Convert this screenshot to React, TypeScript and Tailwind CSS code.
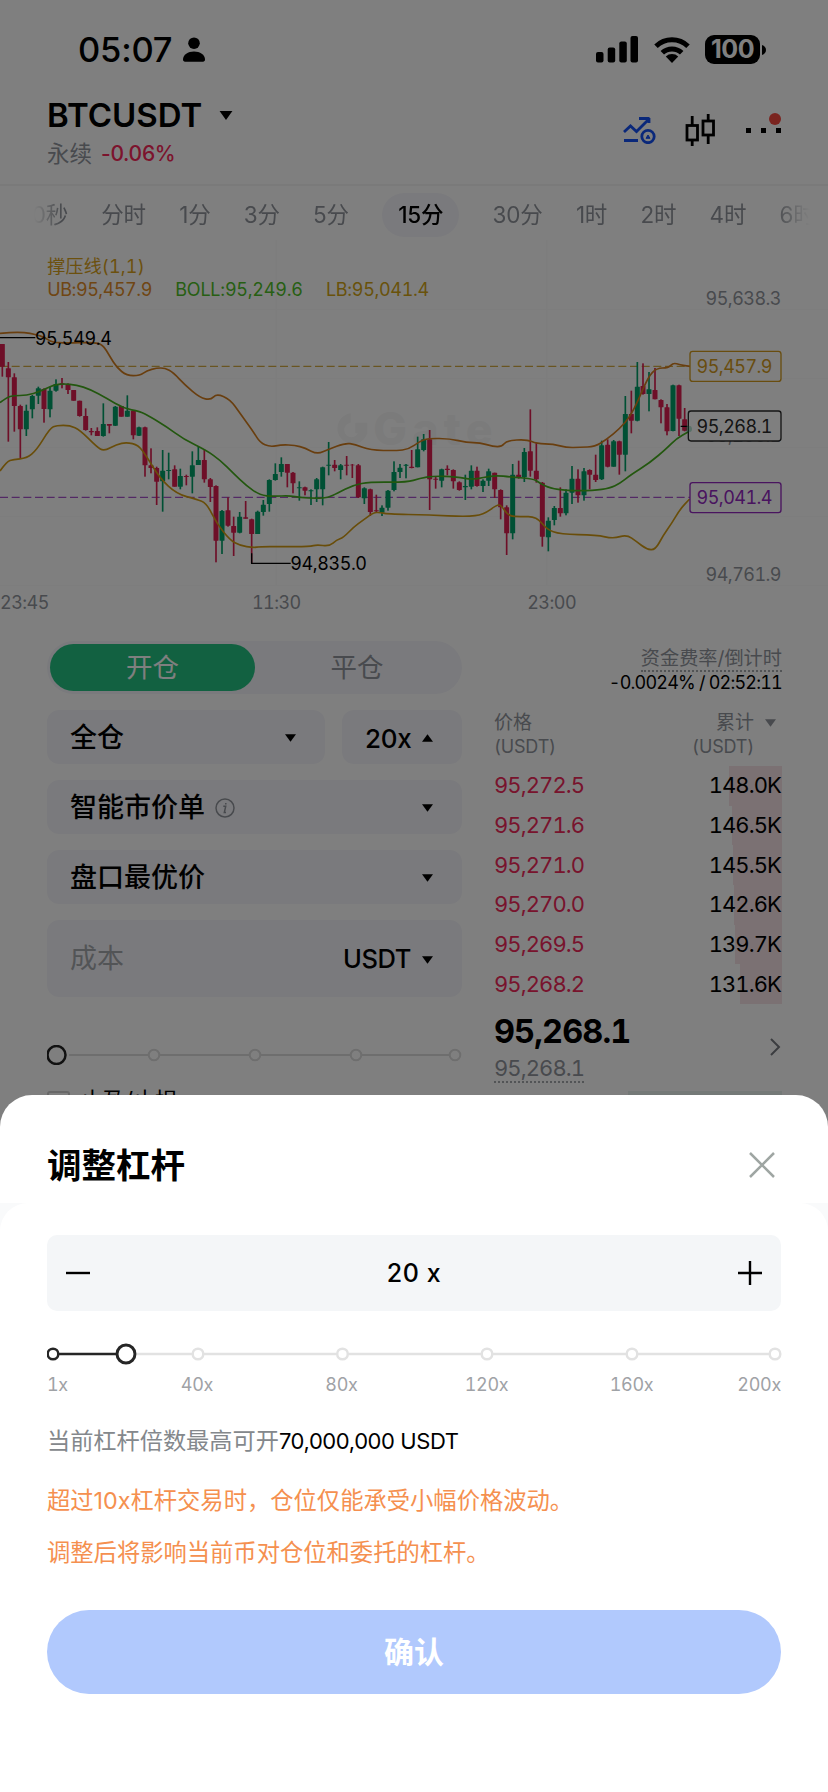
import type { ReactNode } from 'react';
import clsx from 'clsx';

type Point = [number, number];
// x, high, low, body top, body bottom, 1 = up / 0 = down
type Candle = [number, number, number, number, number, 0 | 1];

const INTERVALS = ['30秒', '分时', '1分', '3分', '5分', '15分', '30分', '1时', '2时', '4时', '6时'];

const ASKS = [
  { price: '95,272.5', total: '148.0K', depth: 53 },
  { price: '95,271.6', total: '146.5K', depth: 50 },
  { price: '95,271.0', total: '145.5K', depth: 49 },
  { price: '95,270.0', total: '142.6K', depth: 48 },
  { price: '95,269.5', total: '139.7K', depth: 47 },
  { price: '95,268.2', total: '131.6K', depth: 42 },
];

const CANDLES: Candle[] = [
  [7, 312, 410, 312, 380, 0], [25, 366, 605, 385, 412, 0], [43, 400, 575, 412, 498, 0],
  [61, 494, 655, 498, 568, 0], [79, 494, 588, 512, 568, 1], [97, 465, 535, 468, 508, 1],
  [115, 440, 492, 445, 467, 1], [132, 445, 548, 447, 507, 0], [150, 440, 532, 452, 508, 1],
  [168, 418, 455, 432, 452, 1], [186, 414, 445, 430, 434, 0], [204, 430, 462, 434, 450, 0],
  [221, 450, 482, 450, 482, 0], [239, 482, 530, 482, 528, 0], [257, 505, 572, 528, 570, 0],
  [274, 564, 586, 573, 577, 0], [292, 562, 588, 573, 588, 0], [310, 490, 590, 552, 588, 1],
  [328, 552, 580, 552, 557, 0], [346, 498, 558, 500, 557, 1], [364, 498, 530, 498, 530, 0],
  [382, 466, 530, 512, 530, 1], [400, 512, 598, 512, 586, 0], [417, 560, 588, 562, 587, 1],
  [435, 560, 710, 562, 676, 0], [453, 625, 700, 676, 684, 0], [470, 680, 795, 684, 725, 0],
  [488, 630, 815, 692, 724, 1], [506, 638, 718, 690, 693, 1], [524, 676, 740, 688, 740, 0],
  [541, 686, 748, 708, 740, 1], [559, 704, 736, 708, 711, 0], [577, 634, 760, 676, 710, 1],
  [595, 620, 675, 660, 675, 1], [613, 628, 728, 660, 718, 0], [631, 714, 786, 718, 741, 0],
  [648, 736, 967, 738, 902, 0], [666, 810, 942, 813, 902, 1], [684, 772, 860, 811, 857, 0],
  [701, 830, 948, 858, 878, 0], [719, 816, 880, 830, 878, 1], [737, 783, 836, 832, 836, 0],
  [755, 836, 970, 838, 882, 0], [773, 812, 882, 815, 882, 1], [790, 780, 827, 794, 816, 1],
  [808, 718, 815, 720, 792, 1], [826, 670, 722, 702, 720, 1], [844, 652, 710, 672, 696, 1],
  [862, 672, 742, 672, 698, 0], [879, 696, 760, 698, 730, 0], [898, 724, 782, 742, 745, 1],
  [915, 740, 766, 742, 752, 0], [933, 748, 795, 751, 754, 1], [950, 714, 786, 718, 748, 1],
  [968, 680, 796, 682, 748, 1], [986, 606, 706, 674, 677, 1], [1004, 660, 694, 674, 684, 0],
  [1022, 672, 718, 676, 690, 1], [1040, 648, 706, 674, 677, 0], [1057, 672, 714, 674, 676, 0],
  [1075, 672, 774, 676, 772, 0], [1093, 742, 792, 745, 775, 1], [1111, 746, 828, 748, 816, 0],
  [1129, 764, 816, 811, 814, 0], [1146, 796, 828, 803, 818, 1], [1164, 750, 812, 752, 803, 1],
  [1182, 664, 754, 696, 750, 1], [1200, 672, 714, 683, 696, 1], [1218, 672, 715, 674, 677, 1],
  [1235, 630, 685, 680, 684, 0], [1253, 590, 682, 628, 682, 1], [1271, 582, 634, 598, 630, 1],
  [1289, 570, 810, 598, 718, 0], [1307, 708, 746, 716, 719, 0], [1325, 686, 742, 688, 722, 1],
  [1342, 676, 706, 686, 690, 0], [1360, 688, 746, 690, 724, 0], [1378, 724, 752, 727, 750, 0],
  [1396, 704, 780, 738, 742, 1], [1414, 676, 748, 692, 740, 1], [1431, 680, 740, 692, 738, 0],
  [1449, 718, 756, 722, 738, 1], [1466, 686, 738, 694, 722, 1], [1484, 698, 774, 698, 748, 0],
  [1502, 748, 838, 750, 802, 0], [1520, 796, 945, 802, 880, 0], [1538, 672, 898, 704, 880, 1],
  [1556, 662, 716, 704, 714, 0], [1573, 624, 726, 636, 712, 1], [1591, 508, 710, 634, 692, 0],
  [1609, 608, 728, 692, 718, 0], [1627, 726, 920, 728, 890, 0], [1645, 832, 934, 842, 892, 1],
  [1663, 798, 856, 804, 840, 1], [1681, 742, 830, 804, 820, 0], [1698, 748, 826, 758, 820, 1],
  [1716, 678, 792, 716, 758, 1], [1734, 688, 788, 716, 766, 0], [1752, 684, 782, 694, 766, 1],
  [1769, 688, 748, 690, 704, 0], [1787, 644, 726, 704, 720, 0], [1805, 602, 720, 616, 718, 1],
  [1823, 598, 682, 614, 680, 0], [1841, 600, 680, 604, 680, 1], [1858, 602, 704, 604, 644, 0],
  [1876, 468, 694, 522, 644, 1], [1894, 452, 580, 522, 542, 0], [1912, 366, 544, 440, 542, 1],
  [1929, 370, 464, 438, 462, 0], [1947, 396, 514, 448, 462, 1], [1965, 384, 478, 450, 478, 0],
  [1983, 478, 550, 480, 502, 0], [2001, 492, 586, 502, 574, 0], [2019, 434, 574, 436, 573, 1],
  [2037, 434, 588, 436, 536, 0], [2054, 504, 574, 538, 572, 0],
];

const UPPER: Point[] = [
  [0, 280], [30, 277], [75, 277], [105, 283], [135, 292], [155, 307], [200, 309], [280, 307], [308, 313],
  [330, 350], [350, 382], [380, 407], [420, 407], [440, 392], [470, 384], [495, 384], [520, 398],
  [555, 435], [600, 473], [632, 480], [650, 461], [690, 478], [720, 520], [760, 575], [780, 608],
  [810, 621], [845, 614], [885, 616], [915, 624], [952, 643], [985, 628], [1035, 609], [1065, 613],
  [1110, 631], [1190, 632], [1225, 628], [1260, 604], [1285, 595], [1350, 596], [1400, 608],
  [1440, 608], [1480, 620], [1505, 620], [1520, 602], [1580, 598], [1610, 611], [1660, 612],
  [1700, 623], [1740, 622], [1785, 620], [1820, 598], [1860, 565], [1890, 530], [1915, 480],
  [1945, 410], [1970, 384], [2005, 384], [2020, 368], [2040, 375], [2070, 379],
];

const MIDDLE: Point[] = [
  [0, 488], [20, 472], [40, 467], [80, 466], [120, 455], [160, 435], [190, 431], [230, 435],
  [270, 448], [320, 475], [370, 505], [420, 514], [450, 530], [500, 560], [550, 597], [620, 632],
  [660, 660], [700, 700], [740, 738], [780, 766], [820, 769], [870, 767], [900, 773], [950, 775],
  [985, 773], [1010, 760], [1060, 735], [1110, 726], [1220, 727], [1260, 715], [1300, 708],
  [1370, 710], [1420, 720], [1480, 705], [1540, 712], [1600, 716], [1620, 730], [1650, 744],
  [1700, 752], [1780, 752], [1830, 744], [1860, 730], [1890, 706], [1950, 668], [2000, 625],
  [2030, 595], [2064, 576],
];

const LOWER: Point[] = [
  [0, 693], [20, 665], [40, 658], [80, 655], [110, 630], [150, 565], [170, 556], [210, 556],
  [240, 570], [290, 620], [312, 634], [350, 613], [380, 607], [415, 615], [440, 650], [480, 715],
  [530, 762], [590, 778], [620, 790], [650, 850], [690, 900], [720, 917], [760, 923], [780, 920],
  [840, 920], [930, 920], [950, 914], [988, 919], [1010, 900], [1030, 893], [1060, 862],
  [1090, 840], [1120, 818], [1140, 817], [1160, 822], [1290, 825], [1400, 830], [1450, 824],
  [1490, 795], [1503, 795], [1525, 828], [1560, 830], [1610, 830], [1640, 868], [1680, 883],
  [1790, 885], [1840, 896], [1880, 884], [1910, 905], [1940, 928], [1966, 930], [1990, 885],
  [2015, 850], [2040, 808], [2069, 777],
];

// Smooth a line by running quadratic curves through the midpoints
function curve(points: Point[]) {
  let d = `M${points[0][0]} ${points[0][1]}`;
  for (let i = 1; i < points.length - 1; i++) {
    const [x, y] = points[i];
    const [nx, ny] = points[i + 1];
    d += ` Q${x} ${y} ${(x + nx) / 2} ${(y + ny) / 2}`;
  }
  const last = points[points.length - 1];
  return `${d} L${last[0]} ${last[1]}`;
}

function Caret({ up, className }: { up?: boolean; className?: string }) {
  return (
    <svg viewBox="0 0 10 7" className={clsx('shrink-0', className ?? 'w-[11px] h-[8px]')} fill="currentColor">
      <path d={up ? 'M0 7h10L5 0z' : 'M0 0h10L5 7z'} />
    </svg>
  );
}

function StatusBar() {
  return (
    <div className="h-[88px] pt-[11px] pl-[78px] pr-[62px] flex items-center justify-between">
      <div className="flex items-center">
        <span className="w-[104px] text-[34.500px] font-medium tracking-[-0.200px]">05:07</span>
        <svg viewBox="0 0 24 25" className="w-6 h-[25px]">
          <circle cx="12" cy="6.2" r="5.8" />
          <path d="M1 22.500C1 17.500 6 14.500 12 14.500s11 3 11 8c0 1.300-.8 2.200-2 2.200H3c-1.200 0-2-.9-2-2.200z" />
        </svg>
      </div>
      <div className="flex items-center">
        <svg viewBox="0 0 42 27" className="w-[42px] h-[27px]">
          <rect x="0" y="16" width="7.500" height="10.500" rx="2" />
          <rect x="11.700" y="11.500" width="7.500" height="15" rx="2" />
          <rect x="23.300" y="5.500" width="7.500" height="21" rx="2" />
          <rect x="34.500" y="0" width="7.500" height="26.500" rx="2" />
        </svg>
        <svg viewBox="0 0 38 27" className="w-[38px] h-[27px] ml-[15px]">
          <path d="M19 27l-6.200-6.400a9 9 0 0 1 12.400 0z" />
          <path d="M3 10.200a23 23 0 0 1 32 0M9.300 16.800a14 14 0 0 1 19.400 0" fill="none" stroke="#000" strokeWidth="5" />
        </svg>
        <div className="ml-[14px] w-[55px] h-[29px] rounded-[9px] bg-black text-white text-[25px] leading-none font-bold flex items-center justify-center tracking-[-0.500px]">
          100
        </div>
        <svg viewBox="0 0 4 10" className="w-1 h-[10px] ml-[2px]">
          <path d="M0 0c2.500.8 4 2.600 4 5s-1.500 4.200-4 5z" />
        </svg>
      </div>
    </div>
  );
}

function Header() {
  return (
    <div className="h-[96px] pl-[47px] pr-[46px] flex justify-between">
      <div className="pt-[7px]">
        <div className="flex items-center h-[41px]">
          <h1 className="text-[33px] leading-[41px] font-semibold">BTCUSDT</h1>
          <Caret className="w-[14px] h-[9px] ml-[17px]" />
        </div>
        <div className="flex items-center gap-[9px] h-[36px]">
          <span className="text-[#91959c] text-[22.500px]">永续</span>
          <span className="text-[#f8285a] font-medium text-[21px] tracking-[-0.300px]">-0.06%</span>
        </div>
      </div>
      <div className="flex items-center h-[84px]">
        <svg viewBox="0 0 34 28" className="w-[34px] h-[28px]" fill="none" stroke="#1450f5" strokeWidth="2.800">
          <path d="M2 16l6.500-6 6 5.500L27 3M17 2.500h10.500M27 2v5M2 24.500h14" />
          <circle cx="26" cy="20.500" r="6.200" />
          <path d="M24 22.300h4L26 19z" fill="#1450f5" strokeWidth="1" />
        </svg>
        <svg viewBox="0 0 30 32" className="w-[30px] h-8 ml-[29px] mr-px" fill="none" stroke="#000" strokeWidth="2.800">
          <rect x="2" y="11.500" width="10.500" height="14.500" />
          <rect x="18" y="7" width="10.500" height="14" />
          <path d="M7.200 2v9.500M7.200 26v6M23.200 0v7M23.200 21v9" />
        </svg>
        <div className="relative ml-[30px] w-[36px] flex gap-[10px]">
          <i className="size-[5px] bg-black" />
          <i className="size-[5px] bg-black" />
          <i className="size-[5px] bg-black" />
          <b className="absolute right-[1px] top-[-15px] size-3 rounded-full bg-[#f5483f]" />
        </div>
      </div>
    </div>
  );
}

function IntervalTabs() {
  return (
    <div className="h-[56px] border-t-2 border-[#f5f5f5] px-[34px] pt-[4px]">
      <div className="flex items-center h-[50px] overflow-hidden gap-[33.300px] [mask-image:linear-gradient(to_right,transparent,black_28px,black_740px,transparent_776px)] w-[780px]">
        {INTERVALS.map((label) => (
          <span
            key={label}
            className={clsx(
              'shrink-0 text-[22.500px] leading-[44px] tracking-[-0.200px]',
              label === '15分' ? 'px-4 rounded-full bg-[#f5f5fa] text-black font-medium' : 'text-[#91959c]',
              label === '30秒' && '-ml-[16px]',
            )}
          >
            {label}
          </span>
        ))}
      </div>
    </div>
  );
}

function PriceTag({ x, y, w, color, children }: { x: number; y: number; w: number; color: string; children: string }) {
  return (
    <g>
      <rect x={x} y={y} width={w} height="90" rx="8" fill="#fff" stroke={color} strokeWidth="4" />
      <text x={x + w - 27} y={y + 65} textAnchor="end" fill={color} letterSpacing="-1.600">{children}</text>
    </g>
  );
}

function Chart() {
  return (
    <svg
      viewBox="0 0 2484 1140"
      className="block w-[828px] h-[380px] tabular-nums"
      fontSize="54"
      fontFamily='Inter, "Noto Sans CJK SC", sans-serif'
      letterSpacing="-1"
    >
      <g stroke="#fafafa" strokeWidth="4">
        <path d="M0 208H2484M0 415H2484M0 622H2484M0 829H2484M0 1036H2484M829 0V1036M1640 0V1036" />
      </g>
      <g fill="#f6f6f6">
        <path d="M1052 520a46 46 0 1 0 50 60h-28a22 22 0 1 1-22-32zM1066 548h36v32h-36z" />
        <text x="1120" y="616" fontSize="134" fontWeight="800" letterSpacing="16">Gate</text>
      </g>

      <text x="142" y="99" fill="#d9a21c" letterSpacing="0.500">撑压线(1,1)</text>
      <text x="142" y="168" fill="#e08c28" letterSpacing="-1.400">UB:95,457.9</text>
      <text x="526" y="168" fill="#4fbf28" letterSpacing="-0.700">BOLL:95,249.6</text>
      <text x="978" y="168" fill="#d2a414">LB:95,041.4</text>

      <g strokeWidth="4" strokeDasharray="24 11" opacity="0.8">
        <path d="M0 379H2070" stroke="#c89614" />
        <path d="M0 772H2070" stroke="#9228be" />
      </g>

      {CANDLES.map(([x, high, low, top, bottom, up]) => (
        <g key={x} fill={up ? '#00a068' : '#dc1e50'}>
          <rect x={x - 2.5} y={high} width="5" height={low - high} />
          <rect x={x - 7.5} y={top} width="15" height={bottom - top} rx="1" />
        </g>
      ))}

      <g fill="none" strokeWidth="5">
        <path d={curve(LOWER)} stroke="#d29b14" />
        <path d={curve(UPPER)} stroke="#d27d1e" />
        <path d={curve(MIDDLE)} stroke="#46af1e" />
      </g>

      <g stroke="#000" strokeWidth="4" fill="none">
        <path d="M0 293H106M755 940V970H872M2042 559H2062" />
      </g>
      <text x="104" y="314">95,549.4</text>
      <text x="871" y="991" letterSpacing="-1.300">94,835.0</text>

      <g fill="#91959c" letterSpacing="-1.600">
        <text x="2343" y="194" textAnchor="end">95,638.3</text>
        <text x="2343" y="607" textAnchor="end">95,200.1</text>
        <text x="2343" y="1024" textAnchor="end">94,761.9</text>
        <text x="0" y="1106">23:45</text>
        <text x="829" y="1106" textAnchor="middle">11:30</text>
        <text x="1655" y="1106" textAnchor="middle">23:00</text>
      </g>
      <PriceTag x={2070} y={334} w={273} color="#d29b1e">95,457.9</PriceTag>
      <PriceTag x={2065} y={513} w={278} color="#2a2a2a">95,268.1</PriceTag>
      <PriceTag x={2070} y={728} w={273} color="#9228be">95,041.4</PriceTag>
      <circle cx="2066" cy="567" r="10" fill="#00a068" opacity="0.3" />
    </svg>
  );
}

function Field({ children, className }: { children: ReactNode; className?: string }) {
  return (
    <div className={clsx('flex items-center justify-between rounded-xl bg-[#f5f5fa] pl-[23px] pr-[29px] pt-[2px] text-[27px] font-medium', className ?? 'h-[54px]')}>
      {children}
    </div>
  );
}

function OrderForm() {
  return (
    <div className="w-[415px]">
      <div className="flex h-[53px] rounded-full bg-[#f5f5fa] p-[3px] text-[26.500px]">
        <div className="w-[205px] rounded-full bg-[#24c282] text-white flex items-center justify-center pt-px">开仓</div>
        <div className="flex-1 text-[#91959c] flex items-center justify-center pt-px">平仓</div>
      </div>
      <div className="mt-4 flex gap-[17px]">
        <Field className="h-[54px] w-[278px]">
          全仓
          <Caret />
        </Field>
        <Field className="h-[54px] flex-1">
          <span className="text-[26px] tracking-[-0.300px]">20x</span>
          <Caret up />
        </Field>
      </div>
      <div className="mt-4 space-y-4">
        <Field>
          <span className="flex items-center gap-[10px]">
            智能市价单
            <svg viewBox="0 0 20 20" className="size-5" fill="none" stroke="#91959c" strokeWidth="1.500">
              <circle cx="10" cy="10" r="9" />
              <path d="M8.300 8.300h2.400L9.300 14.500h1.700M10.800 5v1.600" />
            </svg>
          </span>
          <Caret />
        </Field>
        <Field>
          盘口最优价
          <Caret />
        </Field>
        <Field className="h-[77px]">
          <span className="text-[#a5a8ad] font-normal">成本</span>
          <span className="flex items-center gap-[11px] text-[25.500px] tracking-[-0.400px]">
            USDT
            <Caret />
          </span>
        </Field>
      </div>
      <svg viewBox="0 0 416 20" className="block w-[416px] h-5 mt-[48px]" fill="#fff" stroke="#dcdcdc" strokeWidth="2">
        <path d="M22 10H408" />
        {[107, 208, 309, 408].map((x) => (
          <circle key={x} cx={x} cy="10" r="5.300" />
        ))}
        <circle cx="9.500" cy="10" r="9" stroke="#222" strokeWidth="2.500" />
      </svg>
      <div className="mt-[17px] flex items-center gap-[10px] text-[23px] tracking-[-0.600px] h-[30px]">
        <i className="size-[23px] rounded-[3px] border-2 border-[#d0d0d0] mt-[10px]" />
        <span className="mt-[8px]">止盈/止损</span>
      </div>
    </div>
  );
}

function OrderBook() {
  return (
    <div className="w-[288px] tabular-nums">
      <div className="flex flex-col items-end">
        <span className="text-[19.200px] leading-[24px] mt-[5px] text-[#91959c] border-b-2 border-dotted border-[#a5a8ad]">资金费率/倒计时</span>
        <span className="text-[18px] leading-[26px] mt-[-2px] tracking-[-0.800px] whitespace-pre">-0.0024% / 02:52:11</span>
      </div>
      <div className="mt-[15px] flex justify-between text-[19px] leading-6 text-[#91959c]">
        <div>
          价格
          <br />
          <span className="text-[18px] tracking-[-0.200px]">(USDT)</span>
        </div>
        <div className="flex gap-[11px]">
          <div className="text-right">
            累计
            <br />
            <span className="text-[18px] tracking-[-0.200px]">(USDT)</span>
          </div>
          <Caret className="w-[11px] h-[8px] mt-[8px] mr-[6px]" />
        </div>
      </div>
      <div className="mt-[7px]">
        {ASKS.map((row) => (
          <div key={row.price} className="relative flex items-center justify-between h-[39.700px] text-[22px] tracking-[-0.900px]">
            <i className="absolute right-0 inset-y-0 bg-[#f6e2e6]" style={{ width: row.depth }} />
            <span className="text-[#f0285a]">{row.price}</span>
            <span className="relative pr-px">{row.total}</span>
          </div>
        ))}
      </div>
      <div className="flex items-center justify-between pt-[4px]">
        <div>
          <div className="text-[32.500px] leading-[48px] font-bold tracking-[-0.900px]">95,268.1</div>
          <span className="block w-fit text-[22px] leading-[26px] mt-[-1px] tracking-[-0.900px] text-[#91959c] border-b-2 border-dotted border-[#a5a8ad]">95,268.1</span>
        </div>
        <svg viewBox="0 0 12 20" className="w-3 h-5 mr-[1px] mt-[2px]" fill="none" stroke="#777a80" strokeWidth="2">
          <path d="M2 2l8 8-8 8" />
        </svg>
      </div>
      <div className="ml-auto mt-[8px] h-[30px] w-[154px] bg-[#e8f3ee]" />
    </div>
  );
}

function LeverageSlider() {
  return (
    <>
      <svg viewBox="0 0 736 24" className="block w-[736px] h-6 mt-[31px]" fill="#fff" stroke="#e2e2e2" strokeWidth="2.500">
        <path d="M90 12H723" />
        {[151, 295.5, 440, 585, 728].map((x) => (
          <circle key={x} cx={x} cy="12" r="5.300" />
        ))}
        <g stroke="#262626">
          <path d="M12 12H70" />
          <circle cx="6" cy="12" r="5.300" />
          <circle cx="79" cy="12" r="9" strokeWidth="3" />
        </g>
      </svg>
      <div className="mt-[7px] flex text-[18px] leading-6 tracking-[-0.300px] text-[#9fa2a6] tabular-nums">
        <span className="w-[78px]">1x</span>
        <span className="w-[144px] text-center">40x</span>
        <span className="w-[145px] text-center">80x</span>
        <span className="w-[145px] text-center">120x</span>
        <span className="w-[145px] text-center">160x</span>
        <span className="flex-1 text-right">200x</span>
      </div>
    </>
  );
}

function LeverageSheet() {
  return (
    <div className="absolute inset-x-0 bottom-0 h-[697px] rounded-t-[32px] overflow-hidden bg-white">
      <div className="flex items-center justify-between h-[140px] px-[47px]">
        <h2 className="text-[34.500px] font-bold pt-px">调整杠杆</h2>
        <svg viewBox="0 0 28 28" className="size-7 mr-[5px]" fill="none" stroke="#9fa6a3" strokeWidth="2.500">
          <path d="M2 2l24 24M26 2L2 26" />
        </svg>
      </div>
      <div className="h-[588px] -mt-[32px] bg-[#f9fafb]">
        <div className="h-full rounded-t-[28px] bg-white px-[47px] pt-[32px]">
          <div className="h-[76px] rounded-[10px] bg-[#f4f6f8] px-[19px] flex items-center justify-between">
            <svg viewBox="0 0 24 24" className="size-6" stroke="#000" strokeWidth="2.400">
              <path d="M0 12h24" />
            </svg>
            <span className="text-[25px] font-medium whitespace-pre tracking-[0.600px] word-spacing-[2px] pt-[2px]">20 x</span>
            <svg viewBox="0 0 24 24" className="size-6" stroke="#000" strokeWidth="2.400">
              <path d="M0 12h24M12 0v24" />
            </svg>
          </div>
          <LeverageSlider />
          <p className="mt-[28px] text-[23.200px] leading-[32px] text-[#84888c]">
            当前杠杆倍数最高可开<span className="text-black text-[22px] tracking-[-0.400px]">70,000,000 USDT</span>
          </p>
          <p className="mt-[28px] text-[23.300px] leading-[32px] text-[#f5904f]">超过10x杠杆交易时，仓位仅能承受小幅价格波动。</p>
          <p className="mt-[20px] text-[23.300px] leading-[32px] text-[#f5904f]">调整后将影响当前币对仓位和委托的杠杆。</p>
          <button className="mt-[41px] block w-full h-[84px] rounded-full bg-[#b1c9fd] text-white text-[30px] font-bold">确认</button>
        </div>
      </div>
    </div>
  );
}

export default function App() {
  return (
    <div lang="zh-CN" className='relative w-[828px] h-[1792px] overflow-hidden bg-white text-black font-[Inter,"Noto_Sans_CJK_SC",sans-serif]'>
      <StatusBar />
      <Header />
      <IntervalTabs />
      <Chart />
      <div className="flex justify-between pl-[47px] pr-[46px] pt-[21px]">
        <OrderForm />
        <OrderBook />
      </div>
      <div className="absolute inset-0 bg-black/50" />
      <LeverageSheet />
    </div>
  );
}
